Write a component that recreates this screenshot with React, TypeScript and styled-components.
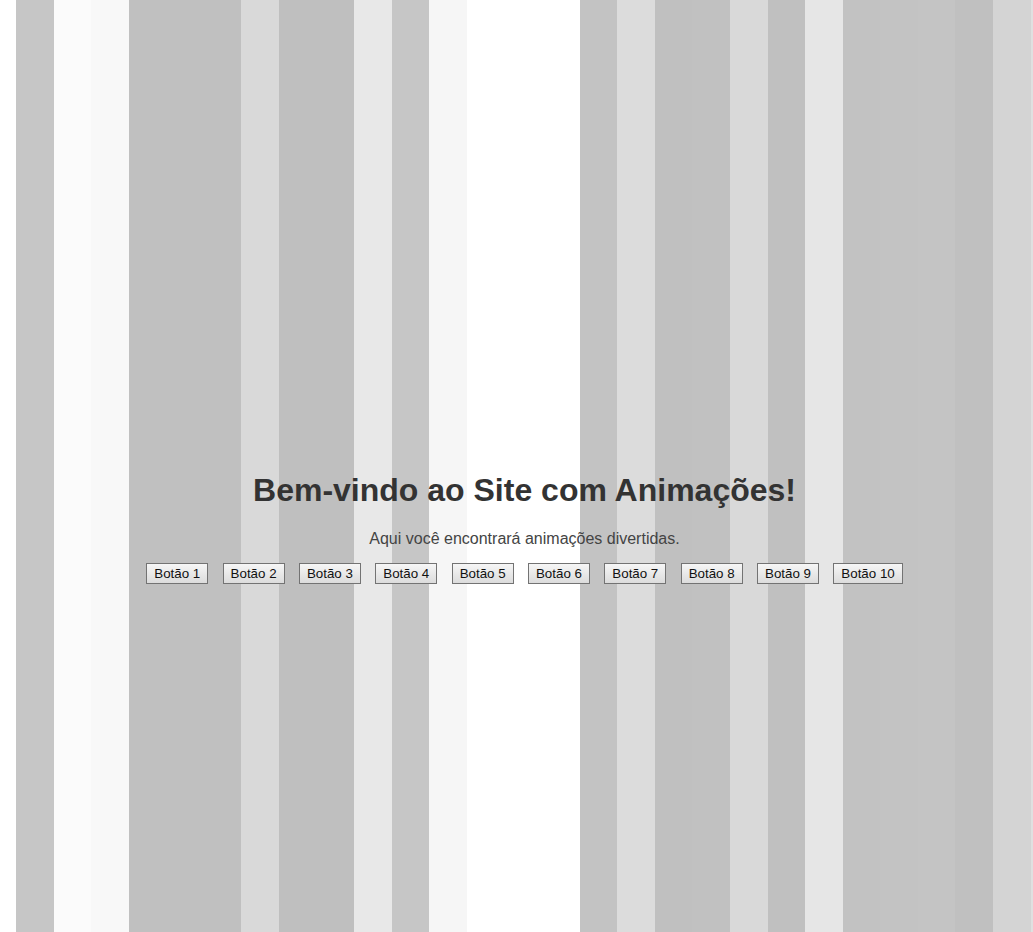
import React from "react";
import styled, { createGlobalStyle } from "styled-components";

// ================= Background stripes =================
const STRIPE_START = 16;
const STRIPE_WIDTH = 37.58;

const stripeColors = [
  "#c6c6c6", "#fbfbfb", "#f8f8f8", "#c0c0c0", "#c0c0c0", "#c0c0c0", "#d9d9d9",
  "#bfbfbf", "#bfbfbf", "#e8e8e8", "#c6c6c6", "#f6f6f6", "#ffffff", "#ffffff",
  "#ffffff", "#c3c3c3", "#dcdcdc", "#c0c0c0", "#c1c1c1", "#d9d9d9", "#c0c0c0",
  "#e6e6e6", "#c2c2c2", "#c3c3c3", "#c4c4c4", "#c0c0c0", "#d4d4d4", "#e0e0e0",
];

const stripes = [
  `#ffffff 0px ${STRIPE_START}px`,
  ...stripeColors.map((c, i) => {
    const from = STRIPE_START + i * STRIPE_WIDTH;
    const to = i === stripeColors.length - 1 ? "100%" : `${STRIPE_START + (i + 1) * STRIPE_WIDTH}px`;
    return `${c} ${from}px ${to}`;
  }),
].join(", ");

// ================= Styled Components =================
const GlobalStyle = createGlobalStyle`
  html, body {
    margin: 0;
    padding: 0;
  }
  body {
    font-family: "Liberation Sans", Arial, sans-serif;
    color: #333;
  }
`;

const Page = styled.div`
  box-sizing: border-box;
  min-height: 932px;
  padding: 123px 0 0 ${STRIPE_START}px;
  display: flex;
  flex-direction: column;
  justify-content: center;
  align-items: center;
  text-align: center;
  background: linear-gradient(to right, ${stripes});
`;

const Title = styled.h1`
  margin: 0 0 21px;
  font-size: 32px;
  font-weight: bold;
  color: #333;
`;

const Subtitle = styled.p`
  margin: 0 0 15px;
  font-size: 16px;
  color: #444;
`;

const ButtonRow = styled.div`
  display: flex;
  justify-content: center;
  gap: 14.4px;
`;

const Button = styled.button`
  font-family: "Liberation Sans", Arial, sans-serif;
  font-size: 13.333px;
  line-height: normal;
  color: #111;
  padding: 2px 7px;
  border: 1px solid #737373;
  border-radius: 0;
  background: linear-gradient(#f6f6f6, #dcdcdc);
  cursor: pointer;
`;

// ================= App =================
const App = () => {
  const buttons = Array.from({ length: 10 }, (_, i) => `Botão ${i + 1}`);

  return (
    <>
      <GlobalStyle />
      <Page>
        <Title>Bem-vindo ao Site com Animações!</Title>
        <Subtitle>Aqui você encontrará animações divertidas.</Subtitle>
        <ButtonRow>
          {buttons.map((label) => (
            <Button key={label}>{label}</Button>
          ))}
        </ButtonRow>
      </Page>
    </>
  );
};

export default App;
